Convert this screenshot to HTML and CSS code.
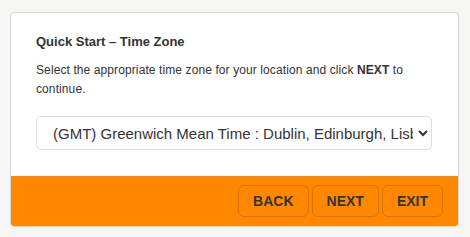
FILE: index.html
```html
<!DOCTYPE html>
<html lang="en">
<head>
  <meta charset="UTF-8">
  <meta name="viewport" content="width=device-width, initial-scale=1.0">
  <title>Quick Start - Time Zone</title>
  <link rel="stylesheet" href="styles.css">
</head>
<body>

  <div class="wizard">
    <div class="wizard-body">
      <h2 class="wizard-title">Quick Start &ndash; Time Zone</h2>
      <p class="wizard-text">Select the appropriate time zone for your location and click <b>NEXT</b> to continue.</p>

      <select class="tz-select">
        <option>(GMT) Greenwich Mean Time : Dublin, Edinburgh, Lisbon, London</option>
        <option>(GMT+01:00) Amsterdam, Berlin, Bern, Rome, Stockholm, Vienna</option>
      </select>
    </div>

    <div class="wizard-footer">
      <button class="wizard-button">BACK</button>
      <button class="wizard-button">NEXT</button>
      <button class="wizard-button">EXIT</button>
    </div>
  </div>

</body>
</html>
```

FILE: styles.css
```css
body {
  margin: 0;
  padding: 12px 11px 10px 10px;
  background-color: #f5f5f3;
  font-family: "Liberation Sans", Arial, sans-serif;
  color: #333;
}
.wizard {
  width: 447px;
  background-color: #fff;
  border: 1px solid #d6d6d6;
  border-radius: 4px;
  overflow: hidden;
}
.wizard-body {
  padding: 21px 26px 26px 25px;
}
.wizard-title {
  margin: 0;
  font-size: 13px;
  line-height: 15px;
  font-weight: bold;
}
.wizard-text {
  margin: 12px 0 0;
  font-size: 12px;
  line-height: 19px;
  letter-spacing: 0.1px;
}
.tz-select {
  display: block;
  width: 100%;
  height: 34px;
  margin-top: 17px;
  padding: 0 2px 0 12px;
  font-family: inherit;
  font-size: 15px;
  color: #333;
  background-color: #fff;
  border: 1px solid #ddd;
  border-radius: 5px;
}
.wizard-footer {
  display: flex;
  justify-content: flex-end;
  gap: 3px;
  padding: 9px 15px 9px;
  background-color: #ff8800;
}
.wizard-button {
  height: 32px;
  padding: 0 14px;
  font-family: inherit;
  font-size: 14px;
  font-weight: bold;
  color: #333;
  background-color: #ff8800;
  border: 1px solid #d97400;
  border-radius: 6px;
  cursor: pointer;
}
```
